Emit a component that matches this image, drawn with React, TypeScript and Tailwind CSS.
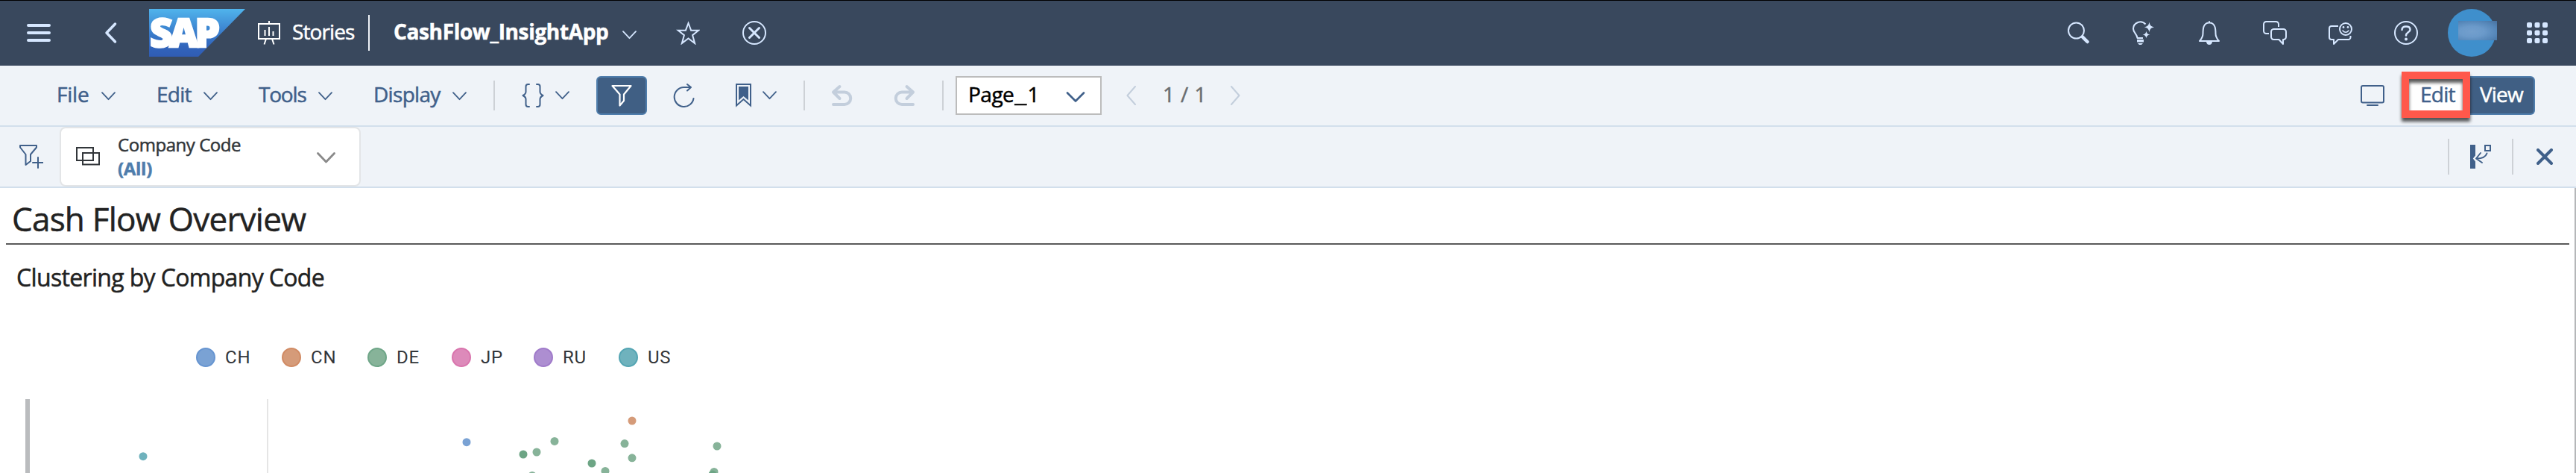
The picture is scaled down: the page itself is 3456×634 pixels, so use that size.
import type { ReactNode } from "react";

function Icon({ w, h = 32, className = "", children }: { w: number; h?: number; className?: string; children: ReactNode }) {
  return (
    <svg
      width={w}
      height={h}
      viewBox={`0 0 ${w} ${h}`}
      fill="none"
      stroke="currentColor"
      strokeWidth="2"
      strokeLinecap="round"
      strokeLinejoin="round"
      className={`shrink-0 ${className}`}
    >
      {children}
    </svg>
  );
}

function Chevron({ className = "" }: { className?: string }) {
  return (
    <Icon w={19} h={12} className={className}>
      <path strokeWidth="1.800" d="M1 1.200 9.500 10.200 18 1.200" />
    </Icon>
  );
}

function Text({ className, children }: { className: string; children: ReactNode }) {
  return <span className={`shrink-0 whitespace-nowrap pb-1 text-[28px] leading-10 ${className}`}>{children}</span>;
}

function Header() {
  return (
    <header className="flex h-[88px] shrink-0 items-center bg-[#39485d] text-[#d6e7ff] shadow-[inset_0_1px_0_#000]">
      <Icon w={32} className="ml-9">
        <path strokeWidth="4" d="M2 6h28M2 16h28M2 26h28" />
      </Icon>
      <Icon w={17} className="ml-[72px]">
        <path strokeWidth="3.500" d="M14.500 4 3 16l11.500 12" />
      </Icon>
      <svg width="129" height="64" viewBox="0 0 129 64" className="ml-[43px] shrink-0 overflow-visible">
        <defs>
          <linearGradient id="logo" x1="0" y1="0" x2="0" y2="1">
            <stop offset="0" stopColor="#50b4ec" />
            <stop offset="0.5" stopColor="#3a7dcc" />
            <stop offset="0.8" stopColor="#3164bb" />
            <stop offset="1" stopColor="#305cb4" />
          </linearGradient>
        </defs>
        <path d="M0 0h129L66 64H0z" fill="url(#logo)" />
        <text
          x="1"
          y="50.500"
          textLength="94"
          lengthAdjust="spacing"
          fill="#fff"
          stroke="#fff"
          strokeWidth="2.400"
          className="font-['Open_Sans',sans-serif] text-[53px] font-extrabold"
        >
          SAP
        </text>
      </svg>
      <Icon w={30} className="ml-[17px] text-white">
        <path strokeLinecap="butt" strokeLinejoin="miter" d="M1 4h28v20H1zM15 0v4M11 24 8.500 31.500M19 24l2.500 7.500M9.500 20v-8M15 20V8M20.500 20v-6" />
      </Icon>
      <Text className="ml-4 w-[92px] tracking-[-0.9px] text-white">Stories</Text>
      <div className="ml-[10px] h-12 w-[2px] bg-[#eef2f7]" />
      <Text className="ml-8 w-[290px] font-bold tracking-[-0.35px] text-white">CashFlow_InsightApp</Text>
      <Chevron className="ml-[17px] translate-y-[3px]" />
      <Icon w={32} className="ml-[53px]">
        <path strokeLinejoin="miter" d="m16.500 3 3.600 9.700h10.100l-8.100 6.400 3 10.900-8.600-6.600L7.900 30l3-10.900-8.100-6.400h10.100z" />
      </Icon>
      <Icon w={32} className="ml-[57px]">
        <circle cx="16" cy="16" r="15" />
        <path strokeWidth="3" d="m9.500 9.500 13 13m0-13-13 13" />
      </Icon>

      <Icon w={29} className="ml-auto">
        <circle cx="11.500" cy="13" r="10.500" />
        <path strokeWidth="4.500" d="m20 21.500 6.500 6.500" />
      </Icon>
      <Icon w={30} className="ml-[58px]">
        <path strokeLinecap="butt" d="M17.500 4.500A9.500 9.500 0 0 0 1 10.500c0 5 5 7 5.500 12.500H14" />
        <path fill="currentColor" stroke="none" d="M22.500 1.500c.8 4.500 2.200 6 6.700 6.900-4.500.8-5.900 2.300-6.700 6.800-.8-4.500-2.200-6-6.700-6.800 4.500-.9 5.900-2.400 6.700-6.900zM18.500 13.500c.6 3.300 1.600 4.400 5 5-3.400.6-4.400 1.700-5 5-.6-3.300-1.600-4.400-5-5 3.400-.6 4.400-1.700 5-5zM6 25h9v3.500H6zM7 30h7l-2 2H9z" />
      </Icon>
      <Icon w={28} className="ml-[59px]">
        <path d="M14 1v1.500M1 27h26c-2.500-3-4.500-5-4.500-10 0-6-.3-14.500-8.500-14.500S5.500 11 5.500 17c0 5-2 7-4.500 10z" />
        <path fill="currentColor" stroke="none" d="M10 28h8q-.5 4-4 4t-4-4z" />
      </Icon>
      <Icon w={32} className="ml-[58px]">
        <path strokeLinecap="butt" d="M8 17H4.500A3.500 3.500 0 0 1 1 13.500v-9A3.500 3.500 0 0 1 4.500 1h13A3.500 3.500 0 0 1 21 4.500V8" />
        <path d="M14.500 11h13a3.500 3.500 0 0 1 3.500 3.500v7a3.500 3.500 0 0 1-3.500 3.500H27v6l-5.500-6h-7a3.500 3.500 0 0 1-3.500-3.500v-7a3.500 3.500 0 0 1 3.500-3.500z" />
      </Icon>
      <Icon w={32} className="ml-14">
        <path strokeLinecap="butt" d="M13 7H4a3 3 0 0 0-3 3v12a3 3 0 0 0 3 3h3v6l6-6h13.500a3 3 0 0 0 3-3v-2" />
        <circle cx="23" cy="11" r="8" />
        <path strokeWidth="1.600" d="M19 13q4 4.500 8 0" />
        <circle cx="20" cy="8.500" r="1.400" fill="currentColor" stroke="none" />
        <circle cx="26" cy="8.500" r="1.400" fill="currentColor" stroke="none" />
      </Icon>
      <Icon w={32} className="ml-14">
        <circle cx="16" cy="16" r="15" />
        <path strokeWidth="2.500" d="M10.500 12c0-3 2.200-4.500 5.500-4.500s5.500 1.500 5.500 4.200c0 3.800-5.500 3.500-5.500 7.800" />
        <circle cx="16" cy="24.500" r="2" fill="currentColor" stroke="none" />
      </Icon>
      <div className="relative ml-10 h-16 w-16 shrink-0 rounded-full bg-[#3f8fcc]">
        <div className="absolute left-[14px] top-4 h-[26px] w-[52px] bg-[radial-gradient(ellipse_at_35%_55%,#739fcd_0%,#6b9aca_35%,#5586b8_70%,#466f9c_100%)]" />
      </div>
      <Icon w={28} className="ml-[42px] mr-[38px]">
        {[2, 12.5, 23].map((y) =>
          [0, 10.5, 21].map((x) => <rect key={`${x}-${y}`} x={x} y={y} width="7" height="7" rx="2" fill="currentColor" stroke="none" />),
        )}
      </Icon>
    </header>
  );
}

function Divider({ className }: { className: string }) {
  return <div className={`w-[2px] shrink-0 bg-[#cdd1d6] ${className}`} />;
}

function Toolbar() {
  return (
    <div className="flex h-[82px] shrink-0 items-center border-b-2 border-[#d2dfec] bg-[#eff3f8] text-[#40608a]">
      <Text className="ml-[76px] w-11 tracking-[-0.2px]">File</Text>
      <Chevron className="ml-4 translate-y-px" />
      <Text className="ml-[55px] w-12 tracking-[-0.77px]">Edit</Text>
      <Chevron className="ml-[15px] translate-y-px" />
      <Text className="ml-[55px] w-16 tracking-[-1.2px]">Tools</Text>
      <Chevron className="ml-4 translate-y-px" />
      <Text className="ml-[55px] w-[92px] tracking-[-0.7px]">Display</Text>
      <Chevron className="ml-[14px] translate-y-px" />
      <Divider className="ml-9 h-10" />
      <Icon w={30} className="ml-9">
        <path d="M10 1H8.500Q5.500 1 5.500 4v7q0 3-4 5 4 2 4 5v7q0 3 3 3H10M20 1h1.500q3 0 3 3v7q0 3 4 5-4 2-4 5v7q0 3-3 3H20" />
      </Icon>
      <Chevron className="ml-[15px]" />
      <div className="ml-9 flex h-[52px] w-[68px] shrink-0 items-center justify-center rounded-md border-2 border-[#4f7dac] bg-[#405f84] text-white">
        <Icon w={28}>
          <path strokeWidth="2.200" d="M1.500 3h25L17 14.500V23l-5.500 6.500v-15z" />
        </Icon>
      </div>
      <Icon w={29} className="ml-[35px]">
        <path d="M23.500 5H14.500A13 13 0 1 0 27.500 20M19 1l5 4-5 4.500" />
      </Icon>
      <Icon w={21} className="ml-[55px]">
        <path strokeLinejoin="miter" strokeLinecap="butt" d="M1 1h19v28.500L10.500 21 1 29.500z" />
        <path fill="currentColor" stroke="none" d="M4 4h13v18.500l-6.500-5.500L4 22.500z" />
      </Icon>
      <Chevron className="ml-[15px]" />
      <Divider className="ml-9 h-10" />
      <Icon w={29} className="ml-[35px] text-[#c3cedc]">
        <path strokeWidth="4" d="M11.500 4 3 11.500l8.500 8.500M3.500 11.500H18a8.200 8.200 0 0 1 0 16.500H3" />
      </Icon>
      <Icon w={29} className="ml-[55px] text-[#c3cedc]">
        <path strokeWidth="4" d="m17.500 4 8.500 7.500-8.500 8.500M25.500 11.500H11a8.200 8.200 0 0 0 0 16.500h15" />
      </Icon>
      <Divider className="ml-9 h-10" />
      <div className="ml-4 flex h-[52px] w-[196px] shrink-0 items-center border-2 border-[#bcbcbc] bg-white">
        <Text className="ml-[15px] w-[131px] text-black">
          <span className="tracking-[-0.5px]">Page</span>
          <span className="mx-[3px] inline-block scale-x-130">_</span>1
        </Text>
        <Icon w={26} h={14} className="translate-y-[2px] text-[#40608a]">
          <path strokeWidth="2.600" d="M2 1.500 13 12.500 24 1.500" />
        </Icon>
      </div>
      <Icon w={13} h={26} className="ml-[33px] text-[#c3cedc]">
        <path d="M12 1 1.500 13 12 25" />
      </Icon>
      <Text className="ml-9 w-14 tracking-[0.4px] text-[#6a6d70]">1 / 1</Text>
      <Icon w={13} h={26} className="ml-[35px] text-[#c3cedc]">
        <path d="M1 1 11.500 13 1 25" />
      </Icon>

      <Icon w={32} className="ml-auto">
        <rect x="1" y="3" width="30" height="22.500" rx="2" />
        <path d="M9 29h14" />
      </Icon>
      <div className="relative ml-[25px] mr-[55px] flex h-[52px] shrink-0">
        <div className="flex h-full w-[90px] items-center rounded-l-md bg-white">
          <Text className="ml-[23px] tracking-[-0.77px]">Edit</Text>
        </div>
        <div className="flex h-full w-[87px] items-center rounded-r-md border-2 border-l-0 border-[#4f7dac] bg-[#405f84]">
          <Text className="ml-[13px] tracking-[-0.83px] text-white">View</Text>
        </div>
        <div className="absolute -left-[2px] -top-[6px] h-[62px] w-[92px] border-[10px] border-[#ff584b] drop-shadow-[0_5px_2px_rgba(0,0,0,0.65)]" />
      </div>
    </div>
  );
}

function FilterBar() {
  return (
    <div className="flex h-[82px] shrink-0 items-center border-b-2 border-[#d2dfec] bg-[#eff3f8] text-[#40608a]">
      <Icon w={32} className="ml-[26px]">
        <path d="M1 1h22v2.500L15 13v9l-6.500 5V13L1 3.500zM25 17v14M18 24h14" />
      </Icon>
      <div className="ml-[22px] flex h-20 w-[404px] shrink-0 items-center rounded-lg border-2 border-[#e3e5e7] bg-white text-[#32363a]">
        <Icon w={32} className="ml-5">
          <path strokeLinejoin="miter" d="M1 4h22v17H1zM9 11h22v15.500H9z" />
        </Icon>
        <div className="ml-6 flex flex-col whitespace-nowrap text-2xl leading-8">
          <span className="tracking-[-0.45px]">Company Code</span>
          <span className="font-bold tracking-[-0.3px] text-[#4f7dac]">(All)</span>
        </div>
        <Icon w={25} h={15} className="ml-auto mr-8 translate-y-px text-[#8a8a8a]">
          <path strokeWidth="2.800" d="m1.500 1.500 11 11.500 11-11.500" />
        </Icon>
      </div>
      <Divider className="ml-auto h-12" />
      <Icon w={28} className="ml-7">
        <path fill="currentColor" stroke="none" d="M0 0h7v14.500L3.800 18.500 7 22.500V32H0z" />
        <path strokeLinejoin="miter" d="M20 1h7v7h-7z" />
        <path d="M22.500 11.500C21 16 17 18.500 8.500 18.500M14 11l-6 7.500 8 5.500" />
      </Icon>
      <Divider className="ml-7 h-12" />
      <Icon w={22} h={22} className="ml-[31px] mr-[31px]">
        <path strokeWidth="4" d="m2 2 18 18m0-18L2 20" />
      </Icon>
    </div>
  );
}

const legend = [
  { name: "CH", width: "w-[115px]", dot: "border-[#6795d1] bg-[#7aa2d4]" },
  { name: "CN", width: "w-[115px]", dot: "border-[#d18b64] bg-[#d59b79]" },
  { name: "DE", width: "w-[113px]", dot: "border-[#6fa688] bg-[#87b399]" },
  { name: "JP", width: "w-[110px]", dot: "border-[#d975ad] bg-[#dd8aba]" },
  { name: "RU", width: "w-[114px]", dot: "border-[#a07bca] bg-[#ad8ed1]" },
  { name: "US", width: "w-[114px]", dot: "border-[#54a5b3] bg-[#6fb2bd]" },
];

const points: [number, number, string][] = [
  [192, 76.7, "#6fb2bd"],
  [626, 57.7, "#7aa2d4"],
  [848, 29, "#d59b79"],
  [744, 56.4, "#87b399"],
  [720, 71, "#87b399"],
  [702, 74, "#6da585"],
  [794, 86, "#6da585"],
  [812, 96.5, "#87b399"],
  [838, 59.6, "#87b399"],
  [848, 78.8, "#87b399"],
  [962, 63, "#87b399"],
  [958, 97.5, "#87b399"],
  [956, 101, "#6da585"],
  [714, 102.5, "#87b399"],
];

function Story() {
  return (
    <main className="flex flex-1 flex-col border-r-2 border-[#b5b7b9] bg-white text-[#222]">
      <h1 className="ml-2 mr-[7px] flex h-[76px] items-center whitespace-nowrap border-b-2 border-[#5a5a5a] pl-2 pt-[7px] text-[44px] tracking-[-0.76px]">
        Cash Flow Overview
      </h1>
      <h2 className="flex h-[86px] items-center whitespace-nowrap pl-[22px] pt-px text-[32px] tracking-[-0.66px]">Clustering by Company Code</h2>
      <div className="flex h-[121px] items-center pl-[263px] pt-2">
        {legend.map((item) => (
          <div key={item.name} className={`flex items-center gap-[13px] ${item.width}`}>
            <span className={`size-[26px] rounded-full border-2 ${item.dot}`} />
            <span className="font-['Roboto',sans-serif] text-2xl tracking-[0.8px] text-[#32363a] [-webkit-text-stroke:0]">{item.name}</span>
          </div>
        ))}
      </div>
      <svg width="1100" height="99" viewBox="0 0 1100 99">
        <path d="M34 0h6v99h-6z" fill="#babcbe" />
        <path d="M358 0h2v99h-2z" fill="#e5e5e5" />
        {points.map(([x, y, fill]) => (
          <circle key={`${x}-${y}`} cx={x} cy={y} r="5.500" fill={fill} />
        ))}
      </svg>
    </main>
  );
}

export default function App() {
  return (
    <div className="flex h-[634px] w-full flex-col overflow-hidden bg-white font-['Open_Sans','Noto_Sans',sans-serif] [-webkit-text-stroke:0.5px]">
      <Header />
      <Toolbar />
      <FilterBar />
      <Story />
    </div>
  );
}
